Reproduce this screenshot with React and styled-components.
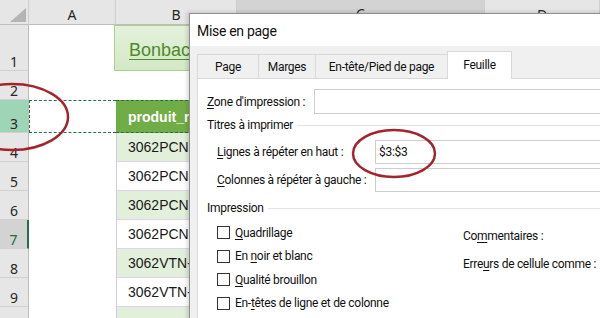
import React from "react"
import styled, { createGlobalStyle } from "styled-components"

const rows = [
  { n: 1, h: 46 },
  { n: 2, h: 29 },
  { n: 3, h: 33, titles: true },
  { n: 4, h: 29, ref: "3062PCN-01" },
  { n: 5, h: 29, ref: "3062PCN-02" },
  { n: 6, h: 29, ref: "3062PCN-03" },
  { n: 7, h: 29, ref: "3062PCN-04", active: true },
  { n: 8, h: 29, ref: "3062VTN-01" },
  { n: 9, h: 29, ref: "3062VTN-02" },
  { n: 10, h: 29, ref: "" },
]

const tabs = [
  { label: "Page", w: 60 },
  { label: "Marges", w: 56 },
  { label: "En-tête/Pied de page", w: 131 },
  { label: "Feuille", w: 63, on: true },
]

const App = () => {
  return (
    <Screen>
      <GlobalStyle />
      <Sheet>
        <Corner />
        <ColHead>A</ColHead>
        <ColHead>B</ColHead>
        <ColHead $current>C</ColHead>
        <ColHead>D</ColHead>
        {rows.map((r, i) => (
          <React.Fragment key={r.n}>
            <RowHead $titles={r.titles} $current={r.active}>
              {r.n}
            </RowHead>
            <Cell $titles={r.titles} $first />
            {r.n === 1 && <TitleCell>Bonbac Confiserie - Catalogue</TitleCell>}
            {r.n === 2 && <Cell $span="3 / -1" />}
            {r.titles && <HeadCell>produit_ref</HeadCell>}
            {r.ref !== undefined && (
              <DataCell $odd={i % 2 === 1}>{r.ref}</DataCell>
            )}
            {r.n > 2 && <Cell $titles={r.titles} $span="4 / -1" />}
          </React.Fragment>
        ))}
      </Sheet>

      <Dialog>
        <TitleBar>Mise en page</TitleBar>
        <DialogBody>
          <Tabs>
            {tabs.map((t) => (
              <Tab key={t.label} $w={t.w} $on={t.on}>
                {t.label}
              </Tab>
            ))}
          </Tabs>
          <Panel>
            <Field $indent={0} $label={107} $h={25}>
              <label>
                <Key>Z</Key>one d'impression :
              </label>
              <Input />
            </Field>
            <Legend $top={4}>Titres à imprimer</Legend>
            <Field $indent={10} $label={158} $h={24} $top={8}>
              <label>
                <Key>L</Key>ignes à répéter en haut :
              </label>
              <Input>$3:$3</Input>
            </Field>
            <Field $indent={10} $label={158} $h={24} $top={4}>
              <label>
                <Key>C</Key>olonnes à répéter à gauche :
              </label>
              <Input />
            </Field>
            <Legend $top={9}>Impression</Legend>
            <Options>
              <Checks>
                <Check>
                  <Box />
                  <span>
                    <Key>Q</Key>uadrillage
                  </span>
                </Check>
                <Check>
                  <Box />
                  <span>
                    En <Key>n</Key>oir et blanc
                  </span>
                </Check>
                <Check>
                  <Box />
                  <span>
                    <Key>Q</Key>ualité brouillon
                  </span>
                </Check>
                <Check>
                  <Box />
                  <span>
                    En-<Key>t</Key>êtes de ligne et de colonne
                  </span>
                </Check>
              </Checks>
              <Settings>
                <Setting>
                  Co<Key>m</Key>mentaires :
                </Setting>
                <Setting>
                  Erre<Key>u</Key>rs de cellule comme :
                </Setting>
              </Settings>
            </Options>
          </Panel>
        </DialogBody>
      </Dialog>

      <Marks viewBox="0 0 600 318">
        <ellipse cx="12" cy="117" rx="56" ry="33" />
        <ellipse cx="394" cy="153.5" rx="41" ry="23.5" />
      </Marks>
    </Screen>
  )
}

const GlobalStyle = createGlobalStyle`
  body {
    margin: 0;
    background: #fff;
  }
`

const Screen = styled.div`
  position: relative;
  width: 600px;
  height: 318px;
  overflow: hidden;
  background: #fff;
`

const Sheet = styled.div`
  display: grid;
  grid-template-columns: 29px 87px 121px 248px 1fr;
  grid-template-rows: 25px 46px 29px 33px repeat(7, 29px);
  font-family: "Noto Sans", sans-serif;
`

const Corner = styled.div`
  position: relative;
  background: #e6e6e6;
  border-right: 1px solid #cfcfcf;
  border-bottom: 1px solid #bdbdbd;
  &::after {
    content: "";
    position: absolute;
    right: 2px;
    bottom: 2px;
    width: 16px;
    height: 14px;
    background: #b4b4b4;
    clip-path: polygon(100% 0, 100% 100%, 0 100%);
  }
`

const ColHead = styled.div`
  display: flex;
  align-items: center;
  justify-content: center;
  font-size: 14px;
  color: #262626;
  background: ${(p) => (p.$current ? "#d3d3d3" : "#e6e6e6")};
  border-right: 1px solid #cfcfcf;
  border-bottom: ${(p) => (p.$current ? "2px solid #217346" : "1px solid #bdbdbd")};
  padding-top: 4px;
`

const RowHead = styled.div`
  display: flex;
  align-items: flex-end;
  justify-content: center;
  line-height: 16px;
  padding-bottom: 0;
  font-size: 14px;
  color: ${(p) => (p.$current ? "#1d6b3f" : "#262626")};
  background: ${(p) =>
    p.$titles ? "#9fd5b7" : p.$current ? "#d3d3d3" : "#e6e6e6"};
  border-right: ${(p) =>
    p.$current ? "2px solid #217346" : "1px solid #bdbdbd"};
  border-bottom: 1px solid #d0d0d0;
`

const Cell = styled.div`
  grid-column: ${(p) => p.$span || "auto"};
  background: #fff;
  border-top: ${(p) => (p.$titles ? "1px dashed #217346" : "none")};
  border-bottom: ${(p) => (p.$titles ? "1px dashed #217346" : "none")};
  border-left: ${(p) => (p.$titles && p.$first ? "1px dashed #217346" : "none")};
`

const TitleCell = styled.div`
  grid-column: 3 / -1;
  display: flex;
  align-items: center;
  margin-left: -2px;
  padding: 4px 0 0 14px;
  font-family: "Liberation Sans", Arial, sans-serif;
  font-size: 18px;
  color: #4d8a2a;
  text-decoration: underline;
  text-underline-offset: 3px;
  white-space: nowrap;
  background: linear-gradient(#e4f1dc, #d3e9c6);
  border: 1px solid #a9d08e;
`

const HeadCell = styled.div`
  display: flex;
  align-items: center;
  padding-left: 12px;
  font-family: "Liberation Sans", Arial, sans-serif;
  font-size: 14px;
  font-weight: bold;
  color: #fff;
  background: #70ad47;
  border-top: 1px dashed #217346;
  border-bottom: 1px dashed #217346;
  white-space: nowrap;
  overflow: hidden;
`

const DataCell = styled.div`
  display: flex;
  align-items: center;
  padding-left: 11px;
  font-family: "Liberation Sans", Arial, sans-serif;
  font-size: 14px;
  color: #1a1a1a;
  background: ${(p) => (p.$odd ? "#e2efda" : "#fff")};
  border-left: 1px solid #d4c8e6;
  border-bottom: 1px solid #ddd3ec;
  white-space: nowrap;
  overflow: hidden;
`

const Dialog = styled.div`
  position: absolute;
  left: 189px;
  top: 13px;
  width: 430px;
  height: 320px;
  display: flex;
  flex-direction: column;
  background: #f0f0f0;
  border-left: 1px solid #8f8f8f;
  border-top: 1px solid #8f8f8f;
  box-shadow: -2px -1px 4px rgba(0, 0, 0, 0.15);
  font-family: Roboto, "Noto Sans", sans-serif;
  font-size: 12px;
  letter-spacing: -0.3px;
  color: #111;
`

const TitleBar = styled.div`
  height: 30px;
  display: flex;
  align-items: center;
  padding: 2px 0 0 7px;
  background: #fff;
  font-size: 14px;
`

const DialogBody = styled.div`
  flex: 1;
  display: flex;
  flex-direction: column;
  padding: 9px 0 0 7px;
`

const Tabs = styled.div`
  display: flex;
  align-items: flex-end;
  height: 23px;
`

const Tab = styled.div`
  position: relative;
  z-index: ${(p) => (p.$on ? 2 : 1)};
  width: ${(p) => p.$w}px;
  height: ${(p) => (p.$on ? 25 : 23)}px;
  margin-right: -1px;
  margin-bottom: ${(p) => (p.$on ? -1 : 0)}px;
  display: flex;
  align-items: center;
  justify-content: center;
  padding-bottom: ${(p) => (p.$on ? 2 : 0)}px;
  background: ${(p) => (p.$on ? "#fff" : "#f0f0f0")};
  border: 1px solid #d9d9d9;
  border-bottom: none;
  white-space: nowrap;
`

const Panel = styled.div`
  flex: 1;
  padding: 10px 0 0 9px;
  background: #fff;
  border-top: 1px solid #d9d9d9;
  border-left: 1px solid #d9d9d9;
`

const Field = styled.div`
  display: flex;
  align-items: center;
  height: ${(p) => p.$h}px;
  margin-top: ${(p) => p.$top || 0}px;
  padding-left: ${(p) => p.$indent}px;
  label {
    width: ${(p) => p.$label}px;
    flex-shrink: 0;
    white-space: nowrap;
  }
`

const Input = styled.div`
  flex: 1;
  align-self: stretch;
  display: flex;
  align-items: center;
  padding-left: 3px;
  border: 1px solid #cdcdcd;
  border-right: none;
  background: #fff;
`

const Legend = styled.div`
  display: flex;
  align-items: center;
  gap: 4px;
  height: 14px;
  margin-top: ${(p) => p.$top}px;
  white-space: nowrap;
  &::after {
    content: "";
    flex: 1;
    height: 1px;
    background: #e3e3e3;
  }
`

const Options = styled.div`
  display: flex;
  margin-top: 6px;
  padding-left: 10px;
`

const Checks = styled.div`
  width: 246px;
  display: flex;
  flex-direction: column;
`

const Check = styled.div`
  height: 23.5px;
  display: flex;
  align-items: center;
  gap: 5px;
  white-space: nowrap;
`

const Box = styled.span`
  width: 13px;
  height: 13px;
  box-sizing: border-box;
  border: 1px solid #333;
  background: #fff;
`

const Settings = styled.div`
  display: flex;
  flex-direction: column;
  padding-top: 1px;
`

const Setting = styled.div`
  height: 28px;
  display: flex;
  align-items: center;
  white-space: nowrap;
`

const Key = styled.span`
  text-decoration: underline;
  text-underline-offset: 2px;
`

const Marks = styled.svg`
  position: absolute;
  inset: 0;
  width: 600px;
  height: 318px;
  pointer-events: none;
  ellipse {
    fill: none;
    stroke: #a3252b;
    stroke-width: 2.5;
  }
`

export default App
